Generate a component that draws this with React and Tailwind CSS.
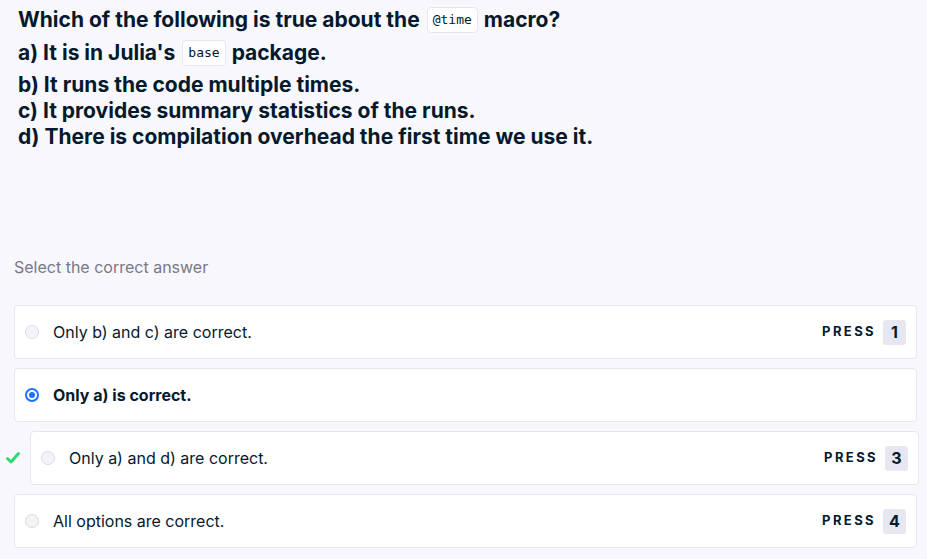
import React from 'react';

const options = [
  { label: 'Only b) and c) are correct.', key: '1' },
  { label: 'Only a) is correct.', key: '2', selected: true },
  { label: 'Only a) and d) are correct.', key: '3', correct: true },
  { label: 'All options are correct.', key: '4' },
];

const Code = ({ children }) => (
  <span className="inline-flex items-center ml-[7px] mr-[6px] px-[5px] h-[26px] bg-white border border-[#e6e6ef] rounded-[4px] font-['DejaVu_Sans_Mono',monospace] text-[13px] font-normal text-[#05192d]">
    {children}
  </span>
);

const Radio = ({ selected }) =>
  selected ? (
    <span className="w-[14px] h-[14px] rounded-full border-[2px] border-[#1f6fff] flex items-center justify-center bg-white">
      <span className="w-[6px] h-[6px] rounded-full bg-[#1f6fff]" />
    </span>
  ) : (
    <span className="w-[14px] h-[14px] rounded-full border border-[#d9dae3] bg-[#f3f3f8]" />
  );

const Option = ({ option }) => (
  <div className="flex items-center">
    {option.correct && (
      <svg width="16" height="16" viewBox="0 0 16 16" className="ml-[-9px] mr-[9px]">
        <path d="M2.5 8.5 L6 12 L13.5 3.5" fill="none" stroke="#2bd86b" strokeWidth="2.8" strokeLinecap="round" strokeLinejoin="round" />
      </svg>
    )}
    <div className={`flex-1 h-[54px] bg-white border border-[#e6e6ef] rounded-[4px] flex items-center pl-[10px] pr-[10px] ${option.correct ? 'mr-[-2px]' : ''}`}>
      <Radio selected={option.selected} />
      <span className={`ml-[14px] text-[16px] text-[#05192d] ${option.selected ? 'font-bold' : ''}`}>
        {option.label}
      </span>
      {!option.selected && (
        <div className="ml-auto flex items-center">
          <span className="text-[13px] font-bold tracking-[2.4px] text-[#05192d]">PRESS</span>
          <span className="ml-[7px] w-[23px] h-[25px] rounded-[3px] bg-[#e6e7f0] flex items-center justify-center text-[16px] font-bold text-[#05192d]">
            {option.key}
          </span>
        </div>
      )}
    </div>
  </div>
);

export default function App() {
  return (
    <div className="min-h-screen bg-[#f7f7fc] font-['Inter',sans-serif] text-[#05192d]">
      <div className="pl-[18px] pt-[3px] text-[21px] font-bold">
        <div className="flex items-center h-[33px]">
          Which of the following is true about the<Code>@time</Code>macro?
        </div>
        <div className="flex items-center h-[33px]">
          a) It is in Julia's<Code>base</Code>package.
        </div>
        <div className="leading-[26px] mt-[3px]">b) It runs the code multiple times.</div>
        <div className="leading-[26px]">c) It provides summary statistics of the runs.</div>
        <div className="leading-[26px]">d) There is compilation overhead the first time we use it.</div>
      </div>

      <div className="mt-[107px] pl-[14px] text-[16px] text-[#767989] leading-[20px]">
        Select the correct answer
      </div>

      <div className="mt-[28px] pl-[14px] pr-[10px] flex flex-col gap-[9px] pb-[10px]">
        {options.map(o => (
          <Option key={o.key} option={o} />
        ))}
      </div>
    </div>
  );
}
